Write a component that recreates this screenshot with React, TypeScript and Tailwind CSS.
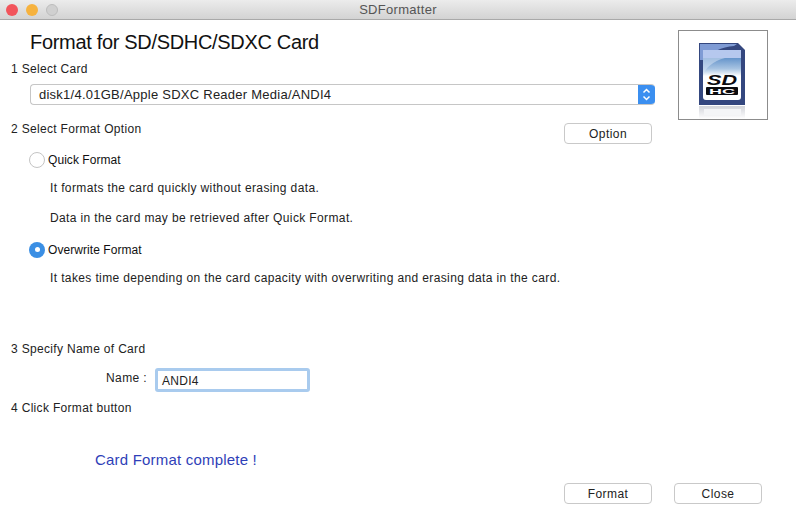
const font = "font-['Liberation_Sans',Arial,sans-serif]";

function SdCard() {
  return (
    <svg className="h-[88px] w-[88px]" viewBox="0 0 88 88" aria-hidden>
      <defs>
        <linearGradient id="face" x1="0" y1="0" x2="0" y2="1">
          <stop offset="0" stopColor="#6594cb" />
          <stop offset="0.6" stopColor="#a8c4e2" />
          <stop offset="1" stopColor="#ffffff" />
        </linearGradient>
        <linearGradient id="mirror" x1="0" y1="0" x2="0" y2="1">
          <stop offset="0" stopColor="#d2d4da" />
          <stop offset="1" stopColor="#ffffff" />
        </linearGradient>
      </defs>
      <path d="M20 75h46v13H20z" fill="url(#mirror)" />
      <path d="M25 78h37v6H25z" fill="#f4f5f7" />
      <path d="M20 12h39l7 7v55H20z" fill="#34477f" />
      <path d="M21 13h37l-3 2c-12 1-24 6-31 14H21z" fill="#7f9bd4" />
      <path d="M24 19h38v47a3 3 0 0 1-3 3H27a3 3 0 0 1-3-3z" fill="#fff" />
      <path d="M24 27h38v18H24z" fill="url(#face)" />
      <path d="M24 45c2-8 10-15 22-18H24z" fill="#d5e2f3" opacity="0.55" />
      <path d="M24 19h38v8H24z" fill="#b6c8ee" />
      <text x="28" y="54" fontFamily="Liberation Sans" fontSize="15" fontWeight="700" fontStyle="italic" fill="#0b0b0f" textLength="30" lengthAdjust="spacingAndGlyphs">SD</text>
      <rect x="27" y="56" width="32" height="8" rx="1" fill="#0b0b0f" />
      <text x="43" y="63" textAnchor="middle" fontFamily="Liberation Sans" fontSize="8" fontWeight="700" fill="#fff" textLength="26" lengthAdjust="spacingAndGlyphs">HC</text>
    </svg>
  );
}

function Button({ label }: { label: string }) {
  return (
    <button
      className="h-[21px] w-[88px] rounded-[4px] border border-[#c9c9c9] bg-white text-[12px] text-[#222] tracking-[0.45px]"
      type="button"
    >
      {label}
    </button>
  );
}

function Radio({ checked, label }: { checked?: boolean; label: string }) {
  return (
    <div className="flex h-[17px] items-center gap-[3px] pl-[29px]">
      {checked ? (
        <span className="grid h-4 w-4 place-items-center rounded-full bg-[#3b8fe4]">
          <span className="h-[5px] w-[5px] rounded-full bg-white" />
        </span>
      ) : (
        <span className="h-4 w-4 rounded-full border border-[#c4c4c4] bg-white" />
      )}
      <span className="text-[12px] tracking-[0.06px] text-[#111]">{label}</span>
    </div>
  );
}

function Step({ children }: { children: string }) {
  return <div className="h-[16px] pl-[11px] text-[12px] leading-[16px] tracking-[0.32px] text-[#222]">{children}</div>;
}

function Note({ children }: { children: string }) {
  return <p className="h-[16px] pl-[50px] text-[12px] leading-[16px] tracking-[0.375px] text-[#222]">{children}</p>;
}

export default function App() {
  return (
    <div className={`${font} h-[518px] w-[796px] overflow-hidden bg-white`}>
      <div className="relative flex h-[20px] items-center gap-2 border-b border-[#a9a9a9] bg-gradient-to-b from-[#ececec] to-[#d3d3d3] pl-[6px]">
        <span className="h-3 w-3 rounded-full bg-[#f2545b]" />
        <span className="h-3 w-3 rounded-full bg-[#f6b23e]" />
        <span className="h-3 w-3 rounded-full border border-[#bdbdbd] bg-[#d0d0d0]" />
        <span className="absolute inset-x-0 top-[2px] text-center text-[13px] leading-[15px] tracking-[0.3px] text-[#555]">SDFormatter</span>
      </div>

      <div className="flex items-start">
        <div className="w-[655px]">
          <h1 className="mt-[10px] h-[24px] pl-[30px] text-[20px] leading-[24px] tracking-[-0.32px] text-[#111]">Format for SD/SDHC/SDXC Card</h1>
          <div className="mt-[7px]">
            <Step>1 Select Card</Step>
          </div>
          <div className="ml-[30px] mt-[7px] flex h-[21px] overflow-hidden rounded-[4px] border border-[#c6c6c6] border-r-0">
            <span className="flex-1 pl-[8px] text-[13px] leading-[19px] tracking-[0.25px] text-[#222]">disk1/4.01GB/Apple SDXC Reader Media/ANDI4</span>
            <span className="-my-px flex w-[17px] flex-col items-center justify-center bg-[#3b8ff0]">
              <svg className="h-[15px] w-[9px]" viewBox="0 0 9 15" fill="none" stroke="#fff" strokeWidth="1.5" aria-hidden>
                <path d="M1.5 5.5 4.5 2.5l3 3M1.5 9.5l3 3 3-3" />
              </svg>
            </span>
          </div>
        </div>
        <div className="ml-[23px] mt-[10px] grid h-[90px] w-[90px] place-items-center border border-[#8c8c8c] bg-white">
          <SdCard />
        </div>
      </div>

      <div className="mt-[3px] flex h-[21px] items-start justify-between pr-[144px]">
        <div className="-mt-[2px]">
          <Step>2 Select Format Option</Step>
        </div>
        <Button label="Option" />
      </div>

      <div className="mt-[7px]">
        <Radio label="Quick Format" />
      </div>
      <div className="mt-[12px]">
        <Note>It formats the card quickly without erasing data.</Note>
      </div>
      <div className="mt-[14px]">
        <Note>Data in the card may be retrieved after Quick Format.</Note>
      </div>
      <div className="mt-[15px]">
        <Radio checked label="Overwrite Format" />
      </div>
      <div className="mt-[12px]">
        <Note>It takes time depending on the card capacity with overwriting and erasing data in the card.</Note>
      </div>

      <div className="mt-[55px]">
        <Step>3 Specify Name of Card</Step>
      </div>
      <div className="mt-[11px] flex h-[24px] items-center pl-[106px]">
        <label className="w-[49px] pb-[4px] text-[12px] tracking-[0.4px] text-[#222]">Name :</label>
        <div className="h-[24px] w-[155px] rounded-[3px] border-[3px] border-[#a9cbee] bg-white pl-[4px] text-[12px] leading-[20px] tracking-[0.3px] text-[#222]">ANDI4</div>
      </div>
      <div className="mt-[8px]">
        <Step>4 Click Format button</Step>
      </div>

      <p className="mt-[35px] h-[18px] pl-[95px] text-[15px] leading-[18px] tracking-[0.2px] text-[#2f3fb8]">Card Format complete !</p>

      <div className="mt-[14px] flex justify-end gap-[22px] pr-[34px]">
        <Button label="Format" />
        <Button label="Close" />
      </div>
    </div>
  );
}
